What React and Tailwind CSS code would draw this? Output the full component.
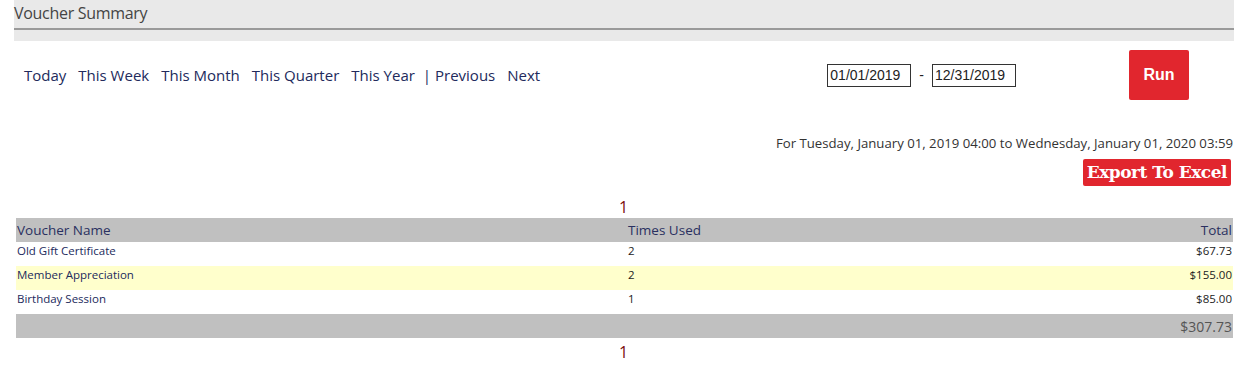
import React from "react";

const rows = [
    { name: "Old Gift Certificate", used: 2, total: "$67.73" },
    { name: "Member Appreciation", used: 2, total: "$155.00" },
    { name: "Birthday Session", used: 1, total: "$85.00" },
];

const links = ["Today", "This Week", "This Month", "This Quarter", "This Year"];

const App = () => {
    return (
        <div className="w-[1249px] h-[373px] bg-white overflow-hidden font-['Open_Sans',sans-serif] text-[#222a5c]">
            {/* title bar */}
            <div className="ml-[14px] mr-[15px] h-[41px] bg-[#e9e9e9]">
                <div className="h-[30px] border-b-2 border-[#9a9a9a] text-[16px] leading-[26px] text-[#444] -tracking-[0.3px]">
                    Voucher Summary
                </div>
            </div>

            {/* filters */}
            <div className="flex items-start h-[68px] pt-[9px]">
                <div className="flex items-center gap-[12px] pl-[24px] mt-[15px] text-[15px] leading-[20px]">
                    {links.map((l) => (
                        <span key={l}>{l}</span>
                    ))}
                    <span className="-ml-[4px]">|&nbsp;Previous</span>
                    <span>Next</span>
                </div>
                <div className="flex items-center ml-auto mt-[14px] font-['Liberation_Sans',sans-serif] text-[14px] text-[#222]">
                    <div className="w-[84px] h-[23px] border border-[#333] pl-[2px] leading-[21px]">01/01/2019</div>
                    <span className="px-[8px]">-</span>
                    <div className="w-[84px] h-[23px] border border-[#333] pl-[2px] leading-[21px]">12/31/2019</div>
                </div>
                <button className="ml-[113px] mr-[60px] w-[60px] h-[50px] bg-[#e1262e] rounded-[2px] text-white font-bold text-[16px] font-['Liberation_Sans',sans-serif]">
                    Run
                </button>
            </div>

            {/* range + export */}
            <div className="pr-[16px] text-right">
                <div className="mt-[25px] text-[13.2px] leading-[18px] text-[#333]">
                    For Tuesday, January 01, 2019 04:00 to Wednesday, January 01, 2020 03:59
                </div>
                <div className="flex justify-end mt-[7px] pr-[2px]">
                    <span className="px-[4px] h-[27px] leading-[27px] bg-[#e1262e] rounded-[2px] text-white font-bold text-[17px] font-['DejaVu_Serif',serif] -tracking-[0.5px]">
                        Export To Excel
                    </span>
                </div>
            </div>

            <div className="text-center text-[#7a0d0d] text-[16px] leading-[22px] mt-[10px] pr-[2px]">1</div>

            {/* table */}
            <div className="ml-[16px] mr-[16px] text-[11.5px]">
                <div className="grid grid-cols-[611px_1fr_auto] h-[24px] items-center bg-[#c0c0c0] text-[13.5px] text-[#2a3060] px-[1px]">
                    <span>Voucher Name</span>
                    <span>Times Used</span>
                    <span>Total</span>
                </div>
                {rows.map((r, i) => (
                    <div
                        key={r.name}
                        className={`grid grid-cols-[611px_1fr_auto] h-[24px] items-start leading-[17px] px-[1px] ${i === 1 ? "bg-[#ffffcc]" : "bg-white"}`}
                    >
                        <span>{r.name}</span>
                        <span className="text-[#222]">{r.used}</span>
                        <span className="text-[#222]">{r.total}</span>
                    </div>
                ))}
                <div className="h-[24px] bg-[#c0c0c0] flex items-center justify-end px-[1px] text-[14px] text-[#555]">
                    $307.73
                </div>
            </div>

            <div className="text-center text-[#7a0d0d] text-[16px] leading-[22px] mt-[3px] pr-[2px]">1</div>
        </div>
    );
};

export default App;
